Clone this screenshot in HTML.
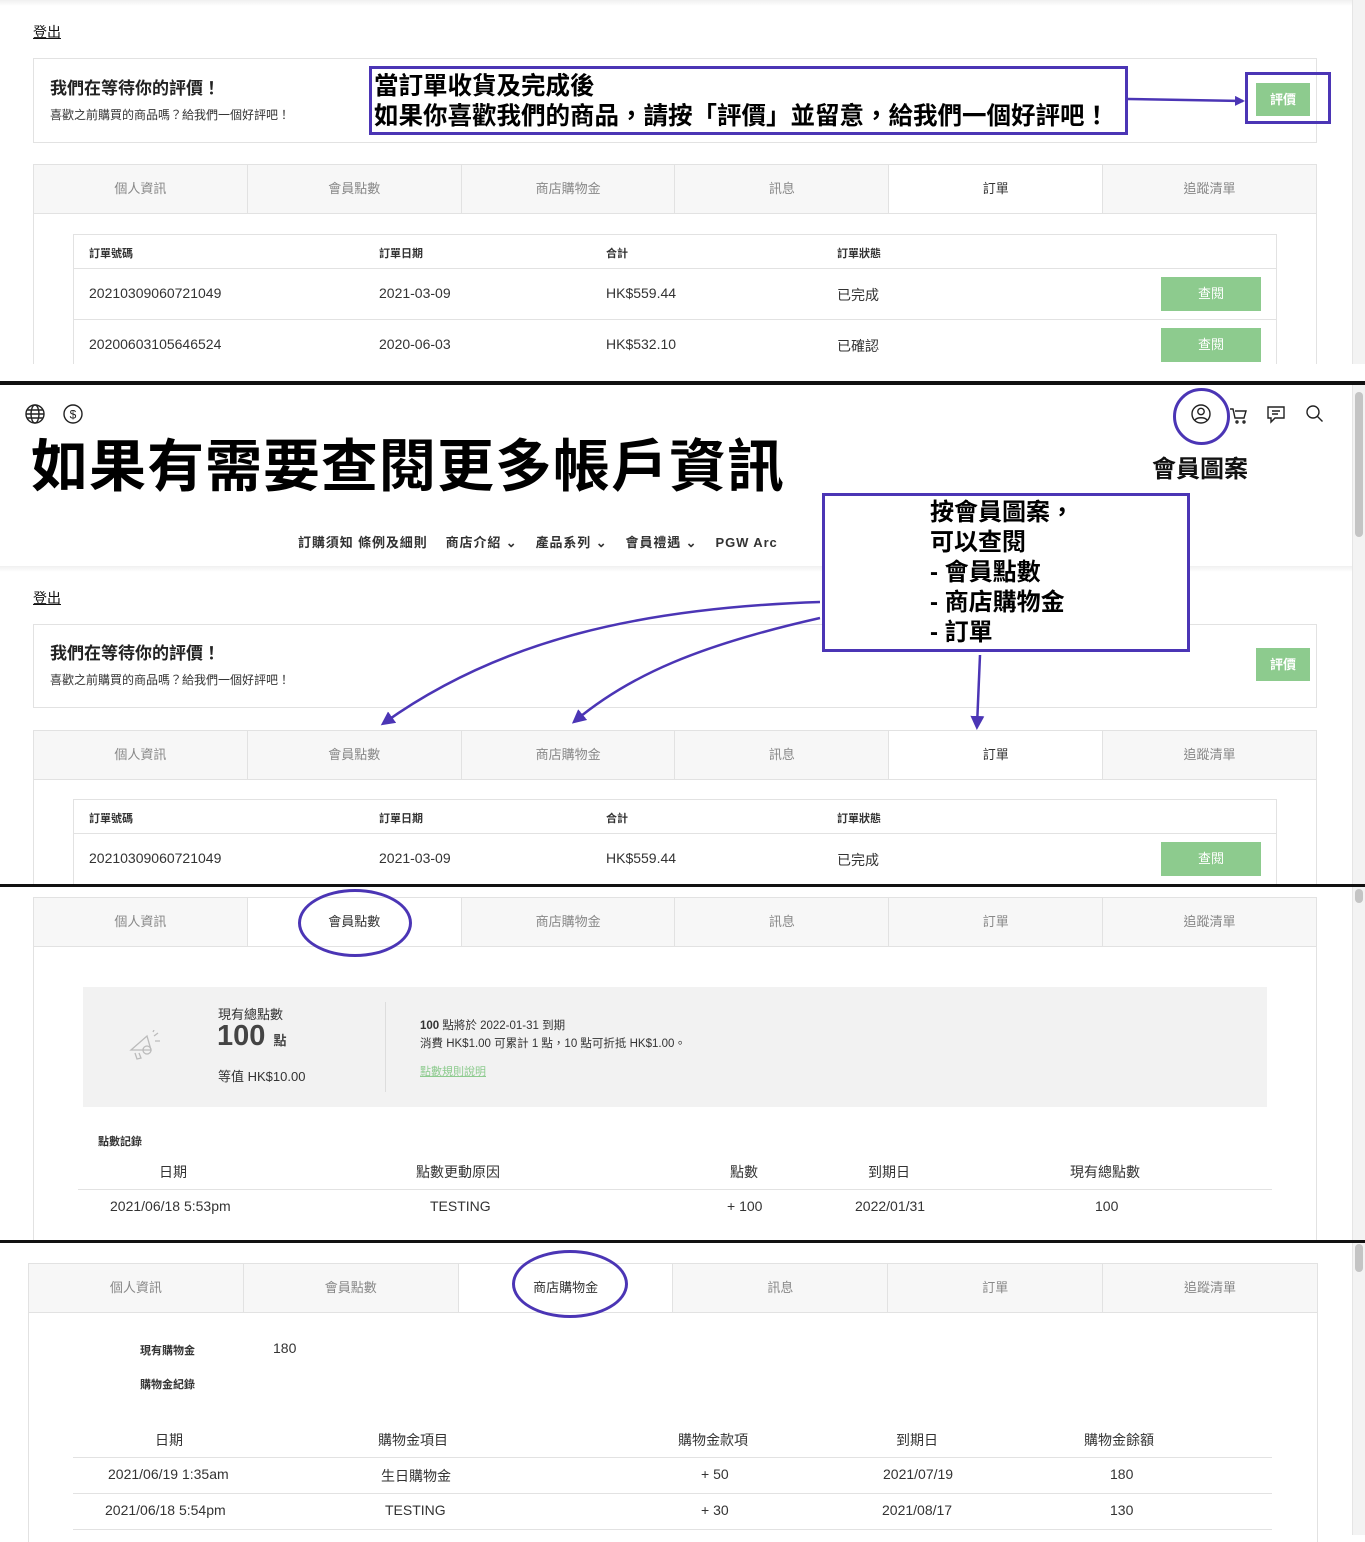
<!DOCTYPE html>
<html><head><meta charset="utf-8"><style>
*{margin:0;padding:0;box-sizing:border-box}
body{width:1365px;height:1535px;position:relative;overflow:hidden;background:#fff;font-family:"Liberation Sans","Noto Sans CJK TC",sans-serif;color:#333}
.a{position:absolute}
.t{white-space:nowrap}
.tabs{position:absolute;display:flex;height:50px;border:1px solid #e2e2e2;background:#f7f7f7}
.tabs div{flex:1;border-right:1px solid #e2e2e2;text-align:center;line-height:48px;font-size:13px;color:#888;background:#f7f7f7}
.tabs div:last-child{border-right:none}
.tabs div.on{background:#fff;color:#333}
.box{position:absolute;border:1px solid #e2e2e2}
.pb{position:absolute;border:3px solid #4b35b5}
.btn{position:absolute;background:#8dcb8e;color:#fff;font-size:13px;text-align:center}
.hl{position:absolute;height:1px;background:#e2e2e2}
.blk{position:absolute;left:0;width:1365px;background:#111}
.sm{font-size:14px;color:#333}
.hd{font-size:11px;font-weight:bold;color:#333}
.sb{position:absolute;left:1352px;width:13px;background:#f3f3f3;border-left:1px solid #e5e5e5}
.th{position:absolute;width:8px;left:1355px;background:#c4c4c4;border-radius:4px}
</style></head><body>
<!-- Section 1 -->
<div class="a" style="left:0;top:0;width:1365px;height:6px;background:linear-gradient(#f0f0f0,#fff)"></div>
<div class="sb" style="top:0;height:380px"></div>
<div class="a t" style="left:33px;top:22px;font-size:14px;text-decoration:underline;color:#111">登出</div>
<div class="box" style="left:33px;top:58px;width:1284px;height:85px"></div>
<div class="a t" style="left:50px;top:74px;font-size:17px;font-weight:bold;color:#222">我們在等待你的評價！</div>
<div class="a t" style="left:50px;top:106px;font-size:12px;color:#333">喜歡之前購買的商品嗎？給我們一個好評吧！</div>
<div class="pb" style="left:369px;top:66px;width:759px;height:69px;background:#fff"></div>
<div class="a t" style="left:374px;top:72px;font-size:24.5px;font-weight:bold;line-height:30px;color:#000">當訂單收貨及完成後<br>如果你喜歡我們的商品，請按「評價」並留意，給我們一個好評吧！</div>
<div class="pb" style="left:1245px;top:72px;width:86px;height:52px"></div>
<div class="btn" style="left:1256px;top:83px;width:54px;height:33px;line-height:33px;font-weight:bold">評價</div>
<svg class="a" style="left:0;top:0" width="1365" height="1535">
<defs><marker id="m" markerWidth="10" markerHeight="10" refX="8" refY="5" orient="auto" markerUnits="userSpaceOnUse"><path d="M0,0 L10,5 L0,10 Z" fill="#4b35b5"/></marker></defs>
<path d="M1128,99 L1243,101" stroke="#4b35b5" stroke-width="2.5" fill="none" marker-end="url(#m)"/>
</svg>
<div class="tabs" style="left:33px;top:164px;width:1284px"><div>個人資訊</div><div>會員點數</div><div>商店購物金</div><div>訊息</div><div class="on">訂單</div><div>追蹤清單</div></div>
<div class="a" style="left:33px;top:213px;width:1284px;height:170px;border-left:1px solid #e2e2e2;border-right:1px solid #e2e2e2"></div>
<div class="box" style="left:73px;top:234px;width:1204px;height:150px;border-bottom:none"></div>
<div class="a t hd" style="left:89px;top:245px">訂單號碼</div><div class="a t hd" style="left:379px;top:245px">訂單日期</div><div class="a t hd" style="left:606px;top:245px">合計</div><div class="a t hd" style="left:837px;top:245px">訂單狀態</div>
<div class="hl" style="left:73px;top:268px;width:1204px"></div>
<div class="a t sm" style="left:89px;top:285px">20210309060721049</div><div class="a t sm" style="left:379px;top:285px">2021-03-09</div><div class="a t sm" style="left:606px;top:285px">HK$559.44</div><div class="a t sm" style="left:837px;top:285px">已完成</div>
<div class="btn" style="left:1161px;top:277px;width:100px;height:34px;line-height:34px">查閱</div>
<div class="hl" style="left:73px;top:319px;width:1204px"></div>
<div class="a t sm" style="left:89px;top:336px">20200603105646524</div><div class="a t sm" style="left:379px;top:336px">2020-06-03</div><div class="a t sm" style="left:606px;top:336px">HK$532.10</div><div class="a t sm" style="left:837px;top:336px">已確認</div>
<div class="btn" style="left:1161px;top:328px;width:100px;height:34px;line-height:34px">查閱</div>
<div class="a" style="left:0;top:364px;width:1365px;height:18px;background:#fff"></div>
<div class="blk" style="top:381px;height:4px"></div>

<!-- Section 2 -->
<div class="sb" style="top:385px;height:499px"></div><div class="th" style="top:392px;height:145px"></div>
<svg class="a" style="left:24px;top:403px" width="22" height="22" viewBox="0 0 22 22" fill="none" stroke="#222" stroke-width="1.4"><circle cx="11" cy="11" r="9"/><ellipse cx="11" cy="11" rx="4" ry="9"/><path d="M2 11h18M3.5 7h15M3.5 15h15"/></svg>
<svg class="a" style="left:62px;top:403px" width="22" height="22" viewBox="0 0 22 22" fill="none" stroke="#222" stroke-width="1.4"><circle cx="11" cy="11" r="9"/><text x="11" y="15.5" font-size="12" text-anchor="middle" fill="#222" stroke="none" font-family="Liberation Sans">$</text></svg>
<div class="a t" style="left:31px;top:430px;font-size:57px;font-weight:bold;color:#000;line-height:74px;letter-spacing:1px">如果有需要查閱更多帳戶資訊</div>
<svg class="a" style="left:1190px;top:403px" width="140" height="24" viewBox="0 0 140 24" fill="none" stroke="#222" stroke-width="1.4"><circle cx="11" cy="11" r="9"/><circle cx="11" cy="8.5" r="3.2"/><path d="M5 17c2-3 10-3 12 0"/><path d="M40 6h3l2 9h9l2-7H45"/><circle cx="47" cy="19" r="1"/><circle cx="54" cy="19" r="1"/><path d="M78 4h16v11h-9l-4 4v-4h-3zM82 8h8M82 11h6"/><circle cx="123" cy="9" r="6"/><path d="M127.5 13.5l5 5"/></svg>
<div class="a" style="left:1173px;top:388px;width:57px;height:57px;border:3px solid #4b35b5;border-radius:50%"></div>
<div class="a t" style="left:1152px;top:449px;font-size:24px;font-weight:bold;color:#111">會員圖案</div>
<div class="a t" style="left:298px;top:532px;font-size:13px;font-weight:bold;color:#333;letter-spacing:0.9px">訂購須知 條例及細則 &nbsp;&nbsp; 商店介紹 ⌄ &nbsp;&nbsp; 產品系列 ⌄ &nbsp;&nbsp; 會員禮遇 ⌄ &nbsp;&nbsp; PGW Arc</div>
<div class="a" style="left:0;top:566px;width:1352px;height:6px;background:linear-gradient(#f0f0f0,#fff)"></div>
<div class="a t" style="left:33px;top:588px;font-size:14px;text-decoration:underline;color:#111">登出</div>
<div class="box" style="left:33px;top:624px;width:1284px;height:84px"></div>
<div class="a t" style="left:50px;top:639px;font-size:17px;font-weight:bold;color:#222">我們在等待你的評價！</div>
<div class="a t" style="left:50px;top:671px;font-size:12px;color:#333">喜歡之前購買的商品嗎？給我們一個好評吧！</div>
<div class="btn" style="left:1256px;top:648px;width:54px;height:33px;line-height:33px;font-weight:bold">評價</div>
<div class="pb" style="left:822px;top:493px;width:368px;height:159px;background:#fff"></div>
<div class="a t" style="left:930px;top:498px;font-size:24px;font-weight:bold;line-height:30px;color:#000">按會員圖案，<br>可以查閱<br>- 會員點數<br>- 商店購物金<br>- 訂單</div>
<div class="tabs" style="left:33px;top:730px;width:1284px"><div>個人資訊</div><div>會員點數</div><div>商店購物金</div><div>訊息</div><div class="on">訂單</div><div>追蹤清單</div></div>
<div class="a" style="left:33px;top:779px;width:1284px;height:106px;border-left:1px solid #e2e2e2;border-right:1px solid #e2e2e2"></div>
<div class="box" style="left:73px;top:799px;width:1204px;height:86px;border-bottom:none"></div>
<div class="a t hd" style="left:89px;top:810px">訂單號碼</div><div class="a t hd" style="left:379px;top:810px">訂單日期</div><div class="a t hd" style="left:606px;top:810px">合計</div><div class="a t hd" style="left:837px;top:810px">訂單狀態</div>
<div class="hl" style="left:73px;top:833px;width:1204px"></div>
<div class="a t sm" style="left:89px;top:850px">20210309060721049</div><div class="a t sm" style="left:379px;top:850px">2021-03-09</div><div class="a t sm" style="left:606px;top:850px">HK$559.44</div><div class="a t sm" style="left:837px;top:850px">已完成</div>
<div class="btn" style="left:1161px;top:842px;width:100px;height:34px;line-height:34px">查閱</div>
<svg class="a" style="left:0;top:0" width="1365" height="1535">
<defs><marker id="m2" markerWidth="14" markerHeight="14" refX="10" refY="7" orient="auto" markerUnits="userSpaceOnUse"><path d="M0,0 L14,7 L0,14 Z" fill="#4b35b5"/></marker></defs>
<path d="M820,602 C640,608 500,640 384,723" stroke="#4b35b5" stroke-width="2.5" fill="none" marker-end="url(#m2)"/>
<path d="M820,618 C700,645 630,675 575,721" stroke="#4b35b5" stroke-width="2.5" fill="none" marker-end="url(#m2)"/>
<path d="M980,655 L977,726" stroke="#4b35b5" stroke-width="2.5" fill="none" marker-end="url(#m2)"/>
</svg>
<div class="blk" style="top:884px;height:3px"></div>

<!-- Section 3 -->
<div class="sb" style="top:887px;height:353px"></div><div class="th" style="top:889px;height:14px"></div>
<div class="tabs" style="left:33px;top:897px;width:1284px"><div>個人資訊</div><div class="on">會員點數</div><div>商店購物金</div><div>訊息</div><div>訂單</div><div>追蹤清單</div></div>
<div class="a" style="left:33px;top:946px;width:1284px;height:295px;border-left:1px solid #e2e2e2;border-right:1px solid #e2e2e2"></div>
<div class="a" style="left:298px;top:889px;width:114px;height:68px;border:3px solid #4b35b5;border-radius:50%"></div>
<div class="a" style="left:83px;top:987px;width:1184px;height:120px;background:#f2f2f2"></div>
<svg class="a" style="left:127px;top:1030px" width="36" height="32" viewBox="0 0 36 32" fill="none" stroke="#bbb" stroke-width="1.3"><path d="M4 20l16-14 4 14z"/><path d="M8 23l2 6 4-1-2-5"/><circle cx="20" cy="20" r="4"/><path d="M27 6l4-3M28 11h5M26 2l1-2"/></svg>
<div class="a t" style="left:218px;top:1004px;font-size:13px;color:#333">現有總點數</div>
<div class="a t" style="left:217px;top:1020px;font-size:29px;font-weight:bold;color:#444">100 <span style="font-size:13px">點</span></div>
<div class="a t" style="left:218px;top:1066px;font-size:13px;color:#333">等值 HK$10.00</div>
<div class="a" style="left:385px;top:1002px;width:1px;height:90px;background:#ddd"></div>
<div class="a t" style="left:420px;top:1017px;font-size:11.5px;color:#333"><b>100</b> 點將於 2022-01-31 到期</div>
<div class="a t" style="left:420px;top:1035px;font-size:11.5px;color:#333">消費 HK$1.00 可累計 1 點，10 點可折抵 HK$1.00。</div>
<div class="a t" style="left:420px;top:1063px;font-size:11px;color:#8dcb8e;text-decoration:underline">點數規則說明</div>
<div class="a t hd" style="left:98px;top:1133px">點數記錄</div>
<div class="a t sm" style="left:159px;top:1162px">日期</div><div class="a t sm" style="left:416px;top:1162px">點數更動原因</div><div class="a t sm" style="left:730px;top:1162px">點數</div><div class="a t sm" style="left:868px;top:1162px">到期日</div><div class="a t sm" style="left:1070px;top:1162px">現有總點數</div>
<div class="hl" style="left:78px;top:1189px;width:1194px"></div>
<div class="a t sm" style="left:110px;top:1198px">2021/06/18 5:53pm</div><div class="a t sm" style="left:430px;top:1198px">TESTING</div><div class="a t sm" style="left:727px;top:1198px">+ 100</div><div class="a t sm" style="left:855px;top:1198px">2022/01/31</div><div class="a t sm" style="left:1095px;top:1198px">100</div>
<div class="blk" style="top:1240px;height:3px"></div>

<!-- Section 4 -->
<div class="sb" style="top:1243px;height:292px"></div><div class="th" style="top:1244px;height:28px"></div>
<div class="tabs" style="left:28px;top:1263px;width:1290px"><div>個人資訊</div><div>會員點數</div><div class="on">商店購物金</div><div>訊息</div><div>訂單</div><div>追蹤清單</div></div>
<div class="a" style="left:28px;top:1312px;width:1290px;height:230px;border-left:1px solid #e2e2e2;border-right:1px solid #e2e2e2"></div>
<div class="a" style="left:512px;top:1250px;width:116px;height:68px;border:3px solid #4b35b5;border-radius:50%"></div>
<div class="a t hd" style="left:140px;top:1342px">現有購物金</div><div class="a t sm" style="left:273px;top:1340px">180</div>
<div class="a t hd" style="left:140px;top:1376px">購物金紀錄</div>
<div class="a t sm" style="left:155px;top:1430px">日期</div><div class="a t sm" style="left:378px;top:1430px">購物金項目</div><div class="a t sm" style="left:678px;top:1430px">購物金款項</div><div class="a t sm" style="left:896px;top:1430px">到期日</div><div class="a t sm" style="left:1084px;top:1430px">購物金餘額</div>
<div class="hl" style="left:73px;top:1457px;width:1199px"></div>
<div class="a t sm" style="left:108px;top:1466px">2021/06/19 1:35am</div><div class="a t sm" style="left:381px;top:1466px">生日購物金</div><div class="a t sm" style="left:701px;top:1466px">+ 50</div><div class="a t sm" style="left:883px;top:1466px">2021/07/19</div><div class="a t sm" style="left:1110px;top:1466px">180</div>
<div class="hl" style="left:73px;top:1493px;width:1199px"></div>
<div class="a t sm" style="left:105px;top:1502px">2021/06/18 5:54pm</div><div class="a t sm" style="left:385px;top:1502px">TESTING</div><div class="a t sm" style="left:701px;top:1502px">+ 30</div><div class="a t sm" style="left:882px;top:1502px">2021/08/17</div><div class="a t sm" style="left:1110px;top:1502px">130</div>
<div class="hl" style="left:73px;top:1529px;width:1199px"></div>
</body></html>
